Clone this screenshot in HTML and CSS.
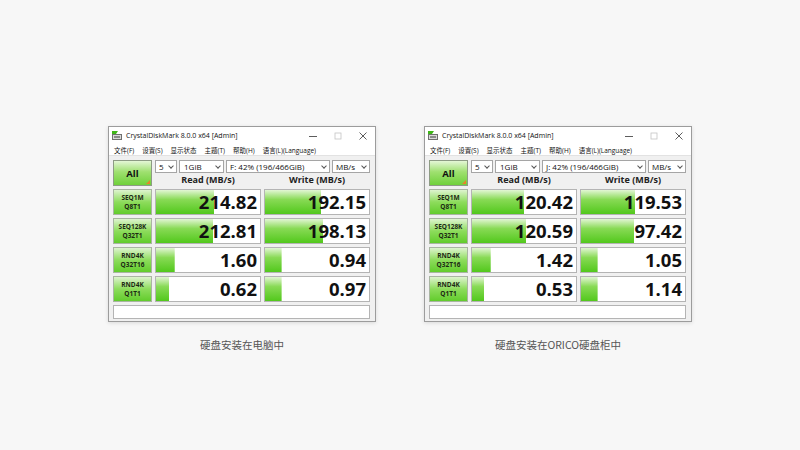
FILE: index.html
```html
<!DOCTYPE html>
<html lang="zh-CN">
<head>
    <meta charset="UTF-8">
    <meta name="viewport" content="width=device-width, initial-scale=1.0">
    <title>CrystalDiskMark 对比</title>
    <link rel="stylesheet" href="styles.css">
</head>
<body>
    <div class="shots">
        <!-- left: disk inside the PC -->
        <figure class="shot">
            <div class="window">
                <div class="titlebar">
                    <svg class="app-icon" width="10" height="9" viewBox="0 0 10 9">
                        <rect x="0.5" y="3.5" width="9" height="5" fill="#d9d9d9" stroke="#6f6f6f"/>
                        <path d="M0 0h6l-2 3H0z" fill="#3fb618"/>
                        <rect x="2" y="5" width="6" height="2" fill="#8a8a8a"/>
                    </svg>
                    <span class="title">CrystalDiskMark 8.0.0 x64 [Admin]</span>
                    <div class="controls">
                        <span class="ctrl"><svg width="8" height="8" viewBox="0 0 8 8"><path d="M0 4.5h8" stroke="#333" stroke-width="0.8"/></svg></span>
                        <span class="ctrl"><svg width="8" height="8" viewBox="0 0 8 8"><rect x="1" y="1" width="6" height="6" fill="none" stroke="#c4c4c4" stroke-width="0.8"/></svg></span>
                        <span class="ctrl"><svg width="8" height="8" viewBox="0 0 8 8"><path d="M0.5 0.5l7 7M7.5 0.5l-7 7" stroke="#333" stroke-width="0.8"/></svg></span>
                    </div>
                </div>
                <div class="menubar">
                    <span>文件(F)</span>
                    <span>设置(S)</span>
                    <span>显示状态</span>
                    <span>主题(T)</span>
                    <span>帮助(H)</span>
                    <span>语言(L)(Language)</span>
                </div>
                <div class="panel">
                    <button class="all">All</button>
                    <div class="head">
                        <div class="combos">
                            <div class="combo c-count">5<i></i></div>
                            <div class="combo c-size">1GiB<i></i></div>
                            <div class="combo c-drive">F: 42% (196/466GiB)<i></i></div>
                            <div class="combo c-unit">MB/s<i></i></div>
                        </div>
                        <div class="cols">
                            <span>Read (MB/s)</span>
                            <span>Write (MB/s)</span>
                        </div>
                    </div>

                    <div class="label">SEQ1M<br>Q8T1</div>
                    <div class="cell" style="--w:56%">214.82</div>
                    <div class="cell" style="--w:54%">192.15</div>

                    <div class="label">SEQ128K<br>Q32T1</div>
                    <div class="cell" style="--w:55%">212.81</div>
                    <div class="cell" style="--w:56%">198.13</div>

                    <div class="label">RND4K<br>Q32T16</div>
                    <div class="cell" style="--w:18%">1.60</div>
                    <div class="cell" style="--w:16%">0.94</div>

                    <div class="label">RND4K<br>Q1T1</div>
                    <div class="cell" style="--w:12.5%">0.62</div>
                    <div class="cell" style="--w:16%">0.97</div>

                    <div class="status"></div>
                </div>
            </div>
            <figcaption>硬盘安装在电脑中</figcaption>
        </figure>

        <!-- right: disk inside the ORICO enclosure -->
        <figure class="shot">
            <div class="window">
                <div class="titlebar">
                    <svg class="app-icon" width="10" height="9" viewBox="0 0 10 9">
                        <rect x="0.5" y="3.5" width="9" height="5" fill="#d9d9d9" stroke="#6f6f6f"/>
                        <path d="M0 0h6l-2 3H0z" fill="#3fb618"/>
                        <rect x="2" y="5" width="6" height="2" fill="#8a8a8a"/>
                    </svg>
                    <span class="title">CrystalDiskMark 8.0.0 x64 [Admin]</span>
                    <div class="controls">
                        <span class="ctrl"><svg width="8" height="8" viewBox="0 0 8 8"><path d="M0 4.5h8" stroke="#333" stroke-width="0.8"/></svg></span>
                        <span class="ctrl"><svg width="8" height="8" viewBox="0 0 8 8"><rect x="1" y="1" width="6" height="6" fill="none" stroke="#c4c4c4" stroke-width="0.8"/></svg></span>
                        <span class="ctrl"><svg width="8" height="8" viewBox="0 0 8 8"><path d="M0.5 0.5l7 7M7.5 0.5l-7 7" stroke="#333" stroke-width="0.8"/></svg></span>
                    </div>
                </div>
                <div class="menubar">
                    <span>文件(F)</span>
                    <span>设置(S)</span>
                    <span>显示状态</span>
                    <span>主题(T)</span>
                    <span>帮助(H)</span>
                    <span>语言(L)(Language)</span>
                </div>
                <div class="panel">
                    <button class="all">All</button>
                    <div class="head">
                        <div class="combos">
                            <div class="combo c-count">5<i></i></div>
                            <div class="combo c-size">1GiB<i></i></div>
                            <div class="combo c-drive">J: 42% (196/466GiB)<i></i></div>
                            <div class="combo c-unit">MB/s<i></i></div>
                        </div>
                        <div class="cols">
                            <span>Read (MB/s)</span>
                            <span>Write (MB/s)</span>
                        </div>
                    </div>

                    <div class="label">SEQ1M<br>Q8T1</div>
                    <div class="cell" style="--w:50%">120.42</div>
                    <div class="cell" style="--w:52%">119.53</div>

                    <div class="label">SEQ128K<br>Q32T1</div>
                    <div class="cell" style="--w:52%">120.59</div>
                    <div class="cell" style="--w:51%">97.42</div>

                    <div class="label">RND4K<br>Q32T16</div>
                    <div class="cell" style="--w:18%">1.42</div>
                    <div class="cell" style="--w:16%">1.05</div>

                    <div class="label">RND4K<br>Q1T1</div>
                    <div class="cell" style="--w:12%">0.53</div>
                    <div class="cell" style="--w:16%">1.14</div>

                    <div class="status"></div>
                </div>
            </div>
            <figcaption>硬盘安装在ORICO硬盘柜中</figcaption>
        </figure>
    </div>
</body>
</html>
```

FILE: styles.css
```css
body {
    margin: 0;
    background-color: #f7f7f7;
    font-family: "Open Sans", "Noto Sans CJK SC", sans-serif;
    color: #222;
}

.shots {
    display: flex;
    justify-content: center;
    gap: 48px;
    padding-top: 126px;
}

.shot {
    margin: 0;
    width: 268px;
    display: flex;
    flex-direction: column;
    align-items: center;
}

.window {
    width: 268px;
    box-sizing: border-box;
    border: 1px solid #9c9c9c;
    background-color: #f0f0f0;
    box-shadow: 0 1px 4px rgba(0, 0, 0, 0.12);
}

.titlebar {
    height: 17px;
    background-color: #fff;
    display: flex;
    align-items: center;
    padding-left: 3px;
    font-size: 7px;
    color: #111;
}

.app-icon {
    margin-right: 4px;
}

.controls {
    margin-left: auto;
    display: flex;
    align-self: stretch;
}

.ctrl {
    width: 25px;
    display: flex;
    align-items: center;
    justify-content: center;
}

.menubar {
    height: 11px;
    background-color: #fff;
    border-bottom: 1px solid #e2e2e2;
    display: flex;
    align-items: center;
    gap: 8px;
    padding-left: 5px;
    font-size: 6.5px;
    color: #111;
}

.panel {
    display: grid;
    grid-template-columns: 39px 106px 106px;
    gap: 3px;
    padding: 4px 6px 2px 4px;
}

.all {
    position: relative;
    height: 26px;
    margin: 0;
    padding: 0;
    border: 1px solid #8d9b84;
    background: linear-gradient(#e4f7d6 0%, #9fe070 45%, #6fd13a 100%);
    font-family: "Open Sans", sans-serif;
    font-size: 9.5px;
    font-weight: 700;
    color: #111;
}

.all::after {
    content: "";
    position: absolute;
    right: 1px;
    bottom: 1px;
    border-left: 4px solid transparent;
    border-bottom: 4px solid #e8822a;
}

.head {
    grid-column: 2 / 4;
    display: flex;
    flex-direction: column;
}

.combos {
    display: flex;
    gap: 2px;
    height: 13px;
}

.combo {
    position: relative;
    box-sizing: border-box;
    height: 13px;
    border: 1px solid #a5a5a5;
    background-color: #fff;
    font-size: 8px;
    line-height: 11px;
    padding-left: 3px;
    color: #111;
}

.combo i {
    position: absolute;
    right: 3px;
    top: 3px;
    width: 3px;
    height: 3px;
    border-right: 0.8px solid #555;
    border-bottom: 0.8px solid #555;
    transform: rotate(45deg);
}

.c-count { width: 22px; }
.c-size { width: 45px; padding-left: 4px; }
.c-drive { flex: 1; }
.c-unit { width: 38px; }

.cols {
    display: flex;
    gap: 3px;
    height: 13px;
    align-items: center;
    font-size: 9px;
    font-weight: 700;
}

.cols span {
    width: 106px;
    text-align: center;
}

.label {
    height: 26px;
    box-sizing: border-box;
    border: 1px solid #a9b5a2;
    background: linear-gradient(#def4cf 0%, #8ddc5c 50%, #62cc2c 100%);
    display: flex;
    flex-direction: column;
    justify-content: center;
    align-items: center;
    font-size: 6.5px;
    line-height: 9.5px;
    font-weight: 700;
    color: #1d2a14;
    text-align: center;
}

.cell {
    height: 26px;
    box-sizing: border-box;
    border: 1px solid #b4b4b4;
    background-color: #fff;
    background-image: linear-gradient(#e2f6d4 0%, #88da55 40%, #52c81c 100%);
    background-size: var(--w) 100%;
    background-repeat: no-repeat;
    text-align: right;
    padding-right: 3px;
    font-size: 18.5px;
    line-height: 24px;
    font-weight: 700;
    color: #111;
}

.status {
    grid-column: 1 / 4;
    height: 14px;
    box-sizing: border-box;
    border: 1px solid #b4b4b4;
    background-color: #fff;
}

figcaption {
    margin-top: 15px;
    font-family: "Noto Sans CJK SC", sans-serif;
    font-size: 10.5px;
    line-height: 15px;
    color: #555;
}
```
